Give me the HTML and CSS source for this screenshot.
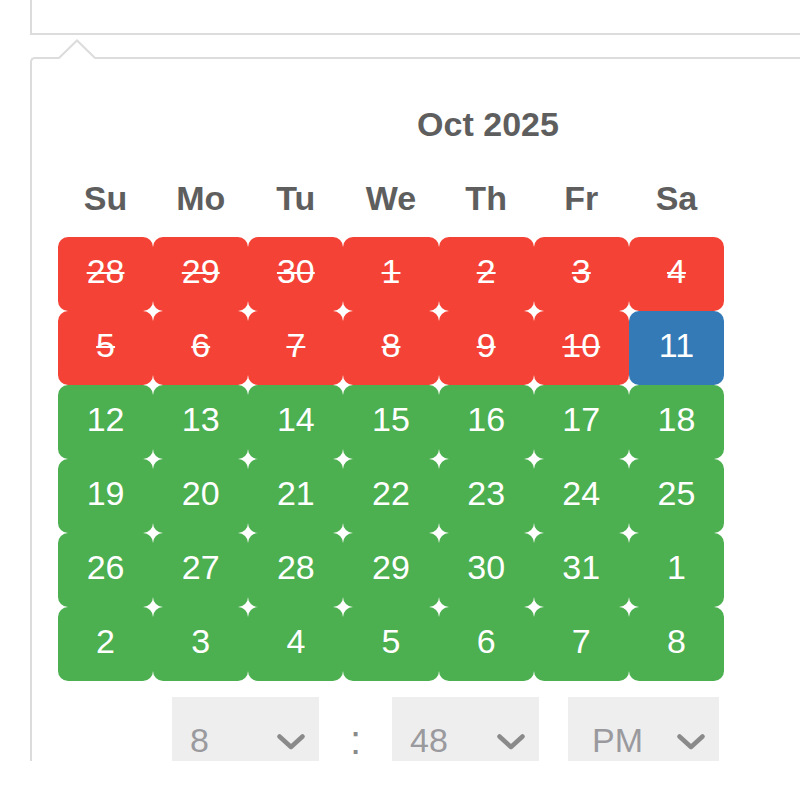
FILE: index.html
```html
<!DOCTYPE html>
<html>
<head>
<meta charset="utf-8">
<link rel="stylesheet" href="styles.css">
</head>
<body>
<div class="field"></div>
<div class="popup">
  <svg class="caret" width="40" height="21" viewBox="0 0 40 21">
    <polygon points="1,20 19,2 37,20" fill="#fff"/>
    <polyline points="1,19 19,1.5 37,19" fill="none" stroke="#dcdcdc" stroke-width="2"/>
  </svg>
  <div class="title">Oct 2025</div>
  <div class="week">
    <span>Su</span><span>Mo</span><span>Tu</span><span>We</span><span>Th</span><span>Fr</span><span>Sa</span>
  </div>
  <div class="days">
    <div class="day off">28</div><div class="day off">29</div><div class="day off">30</div><div class="day off">1</div><div class="day off">2</div><div class="day off">3</div><div class="day off">4</div>
    <div class="day off">5</div><div class="day off">6</div><div class="day off">7</div><div class="day off">8</div><div class="day off">9</div><div class="day off">10</div><div class="day active">11</div>
    <div class="day on">12</div><div class="day on">13</div><div class="day on">14</div><div class="day on">15</div><div class="day on">16</div><div class="day on">17</div><div class="day on">18</div>
    <div class="day on">19</div><div class="day on">20</div><div class="day on">21</div><div class="day on">22</div><div class="day on">23</div><div class="day on">24</div><div class="day on">25</div>
    <div class="day on">26</div><div class="day on">27</div><div class="day on">28</div><div class="day on">29</div><div class="day on">30</div><div class="day on">31</div><div class="day on">1</div>
    <div class="day on">2</div><div class="day on">3</div><div class="day on">4</div><div class="day on">5</div><div class="day on">6</div><div class="day on">7</div><div class="day on">8</div>
  </div>
  <div class="time">
    <div class="sel sel-h"><span>8</span><svg class="chev" width="28" height="16" viewBox="0 0 28 16"><polyline points="2.5,2.5 14,13 25.5,2.5" fill="none" stroke="#8a8a8a" stroke-width="4.5" stroke-linecap="round" stroke-linejoin="round"/></svg></div>
    <div class="colon">:</div>
    <div class="sel sel-m"><span>48</span><svg class="chev" width="28" height="16" viewBox="0 0 28 16"><polyline points="2.5,2.5 14,13 25.5,2.5" fill="none" stroke="#8a8a8a" stroke-width="4.5" stroke-linecap="round" stroke-linejoin="round"/></svg></div>
    <div class="sel sel-p"><span>PM</span><svg class="chev" width="28" height="16" viewBox="0 0 28 16"><polyline points="2.5,2.5 14,13 25.5,2.5" fill="none" stroke="#8a8a8a" stroke-width="4.5" stroke-linecap="round" stroke-linejoin="round"/></svg></div>
  </div>
</div>
</body>
</html>
```
FILE: styles.css
```css
html, body {
  margin: 0;
  padding: 0;
  background: #fff;
  overflow: hidden;
  width: 800px;
  height: 800px;
}
body {
  font-family: "Liberation Sans", Arial, sans-serif;
}
.field {
  margin-left: 30px;
  margin-top: -18px;
  height: 53px;
  width: 900px;
  border: 2px solid #dcdcdc;
  border-right: none;
  box-sizing: border-box;
}
.popup {
  position: relative;
  margin-left: 30px;
  margin-top: 22px;
  width: 912px;
  border-top: 2px solid #dcdcdc;
  border-left: 2px solid #dcdcdc;
  border-top-left-radius: 5px;
}
.caret {
  position: absolute;
  left: 26px;
  top: -20px;
  display: block;
}
.title {
  margin-top: 40px;
  height: 50px;
  line-height: 50px;
  text-align: center;
  font-size: 34px;
  font-weight: bold;
  color: #5e5e5e;
}
.week {
  margin-top: 24px;
  margin-left: 26px;
  width: 666px;
  display: grid;
  grid-template-columns: repeat(7, 1fr);
}
.week span {
  height: 50px;
  display: flex;
  align-items: center;
  justify-content: center;
  font-size: 34px;
  font-weight: bold;
  color: #5e5e5e;
}
.days {
  margin-top: 14px;
  margin-left: 26px;
  width: 666px;
  display: grid;
  grid-template-columns: repeat(7, 1fr);
  grid-auto-rows: 74px;
}
.day {
  display: flex;
  align-items: center;
  justify-content: center;
  padding-bottom: 6px;
  box-sizing: border-box;
  border-radius: 10px;
  font-size: 34px;
  color: #fff;
}
.off {
  background: #f44336;
  text-decoration: line-through;
  text-decoration-thickness: 2px;
}
.on {
  background: #4caf50;
}
.active {
  background: #337ab7;
}
.time {
  margin-top: 16px;
  margin-left: 140px;
  height: 64px;
  overflow: hidden;
  display: flex;
  align-items: flex-start;
}
.sel {
  height: 86px;
  background: #eeeeee;
  display: flex;
  align-items: center;
  justify-content: space-between;
  padding: 0 14px 0 18px;
  box-sizing: border-box;
  font-size: 34px;
  color: #9a9a9e;
}
.sel-h { width: 147px; }
.sel-m { width: 147px; }
.sel-p { width: 151px; margin-left: 29px; padding-left: 24px; }
.chev { display: block; margin-top: 4px; }
.colon {
  width: 73px;
  padding-top: 28px;
  text-align: center;
  font-size: 40px;
  line-height: 30px;
  color: #8a8a8a;
}
```
